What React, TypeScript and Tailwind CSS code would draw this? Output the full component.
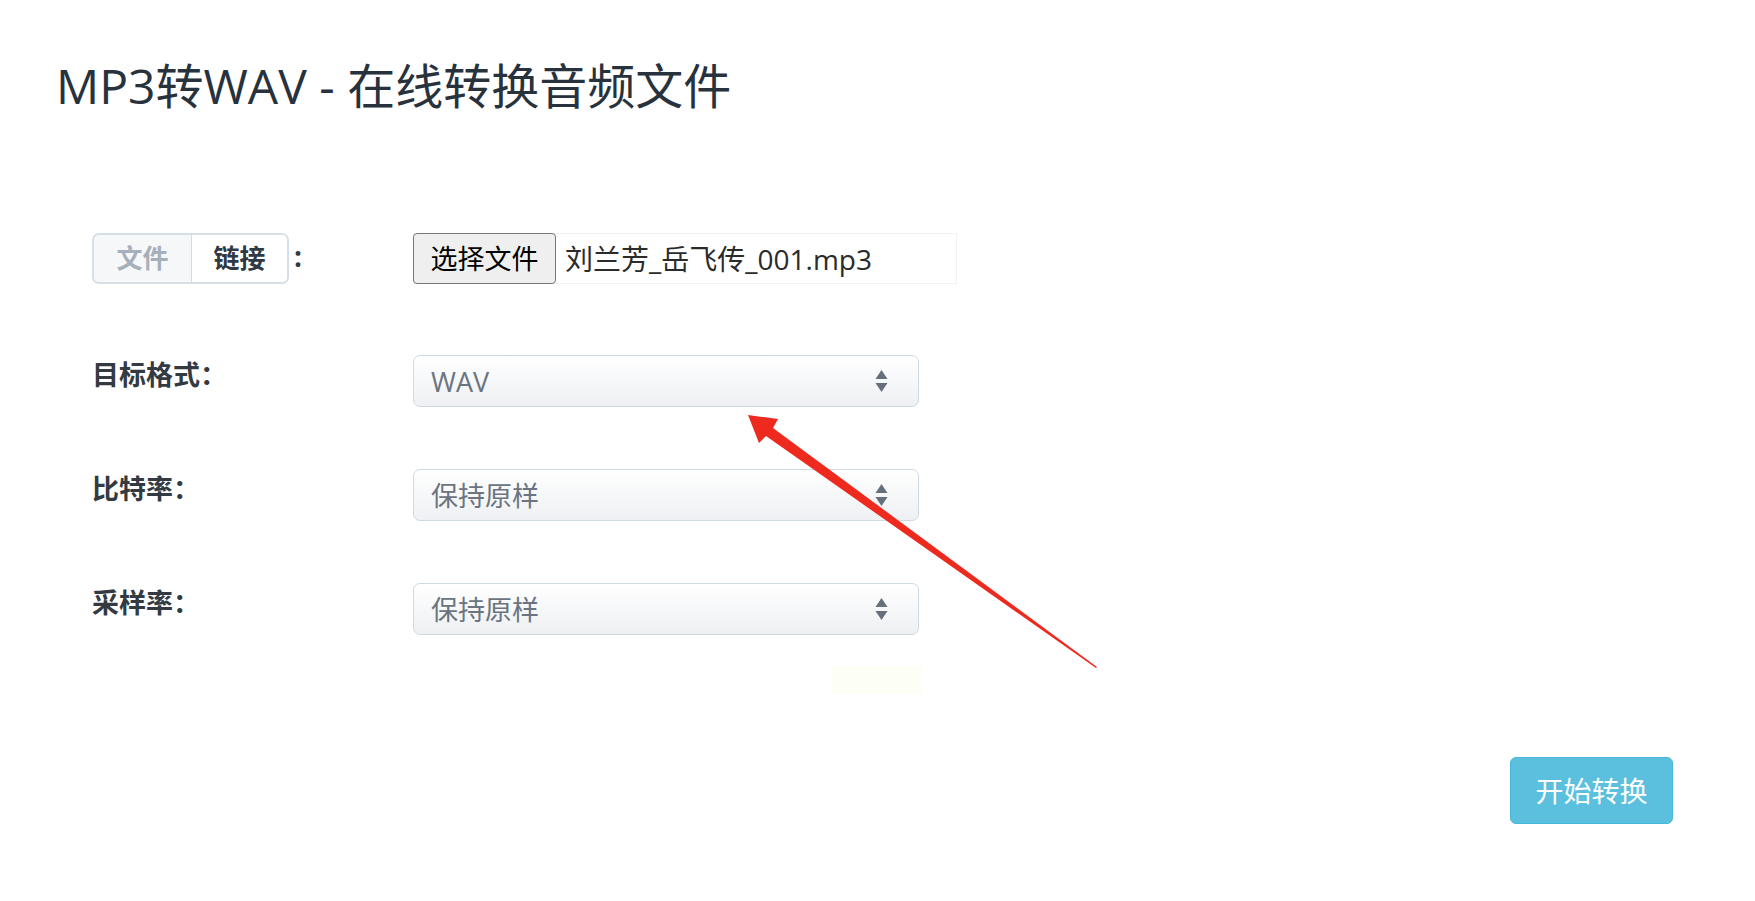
import React from "react";

const font = "font-['Open_Sans','Noto_Sans_CJK_SC',sans-serif]";

function SelectBox({ value }: { value: string }) {
  return (
    <div className="flex items-center justify-between w-[506px] h-[52px] rounded-[7px] border border-[#cfd9e3] bg-gradient-to-b from-white to-[#eef0f3] pl-[17px] pr-[30px]">
      <span className="text-[27px] text-[#6b7480] leading-none">{value}</span>
      <svg width="13" height="22" viewBox="0 0 13 22" className="text-[#66707c]">
        <path d="M6.5 0 L12.5 9 L0.5 9 Z" fill="currentColor" />
        <path d="M0.5 13 L12.5 13 L6.5 22 Z" fill="currentColor" />
      </svg>
    </div>
  );
}

function Row({ label, children, className }: { label: React.ReactNode; children: React.ReactNode; className?: string }) {
  return (
    <div className={"grid grid-cols-[321px_1fr] " + (className ?? "")}>
      <div className="pt-[1px]">{label}</div>
      <div>{children}</div>
    </div>
  );
}

export default function App() {
  const labelCls = "text-[27px] font-bold text-[#333a42] leading-[38px]";
  return (
    <div className={`relative w-full min-h-[901px] bg-white ${font}`}>
      <h1 className="pl-[56px] pt-[59px] text-[48px] leading-[54px] text-[#28323d] font-normal">
        MP3转WAV - 在线转换音频文件
      </h1>

      <div className="pl-[92px] mt-[120px]">
        <div className="grid grid-cols-[321px_1fr]">
          <div className="flex items-center h-[51px]">
            <div className="flex w-[197px] h-[51px] rounded-[7px] border-2 border-[#d6dee6] overflow-hidden">
              <div className="w-[98px] flex items-center justify-center bg-[#f6f7f9] border-r border-[#d3dbe3] text-[26px] font-bold text-[#a6b0bc]">
                文件
              </div>
              <div className="flex-1 flex items-center justify-center bg-white text-[26px] font-bold text-[#2f3944]">
                链接
              </div>
            </div>
            <span className="ml-[5px] -mt-[6px] text-[28px] font-bold text-[#333a42]">:</span>
          </div>
          <div className="flex items-center w-[544px] h-[51px] border border-[#f2f2f2]">
            <button className="h-[51px] w-[143px] -ml-px rounded-[4px] border border-[#767676] bg-[#efefef] text-[27px] text-black font-['Noto_Sans_CJK_SC',sans-serif]">
              选择文件
            </button>
            <span className="ml-[9px] text-[28px] text-[#2b2b2b]">刘兰芳_岳飞传_001.mp3</span>
          </div>
        </div>

        <Row className="mt-[71px]" label={<span className={labelCls}>目标格式：</span>}>
          <SelectBox value="WAV" />
        </Row>
        <Row className="mt-[62px]" label={<span className={labelCls}>比特率：</span>}>
          <SelectBox value="保持原样" />
        </Row>
        <Row className="mt-[62px]" label={<span className={labelCls}>采样率：</span>}>
          <SelectBox value="保持原样" />
        </Row>

        <div className="ml-[740px] mt-[31px] w-[90px] h-[28px] bg-[#fdfef6]" />
      </div>

      <div className="flex justify-end pr-[82px] mt-[63px]">
        <button className="w-[163px] h-[67px] rounded-[6px] border border-[#46b8da] bg-[#5bc0de] text-white text-[28px]">
          开始转换
        </button>
      </div>

      <svg className="absolute left-0 top-0 pointer-events-none" width="1755" height="901">
        <polygon
          points="748,415 778,419 773,428 1097,667 1096,668 766,436 759,443"
          fill="#ee2a1f"
        />
      </svg>
    </div>
  );
}
